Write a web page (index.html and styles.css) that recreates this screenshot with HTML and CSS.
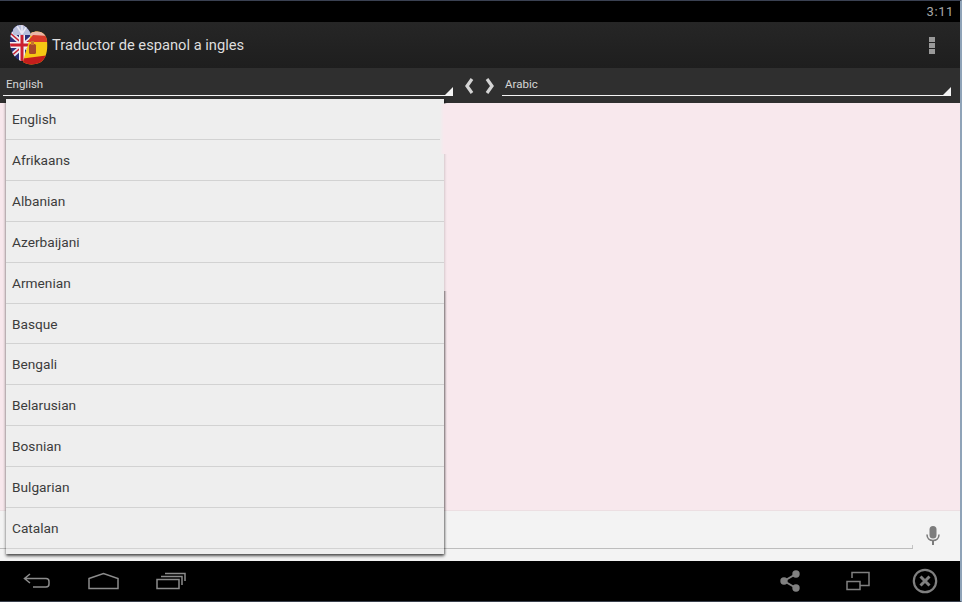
FILE: index.html
```html
<!DOCTYPE html>
<html lang="es">
<head>
    <meta charset="UTF-8">
    <meta name="viewport" content="width=device-width, initial-scale=1.0">
    <title>Traductor de espanol a ingles</title>
    <link rel="stylesheet" href="styles.css">
</head>
<body>
    <div class="screen">
        <div class="status-bar"><span class="clock">3:11</span></div>

        <div class="action-bar">
            <!-- flags logo -->
            <svg class="logo" width="40" height="42" viewBox="0 0 40 42">
                <defs>
                    <clipPath id="ukClip"><ellipse cx="12.500" cy="19" rx="11.500" ry="18" transform="rotate(-6 12.500 19)"/></clipPath>
                    <clipPath id="esClip"><path d="M22 9c6-3 15-2 16 8 1 10-1 19-8 22-5 2-12 2-16-1l2-8 3-9z"/></clipPath>
                </defs>
                <g clip-path="url(#ukClip)">
                    <rect width="30" height="42" fill="#2a2f78"/>
                    <path d="M0 8 30 34M30 8 0 34" stroke="#e6e6f0" stroke-width="5"/>
                    <path d="M0 8 30 34M30 8 0 34" stroke="#c4202e" stroke-width="1.500"/>
                    <path d="M13 0V42M0 21H30" stroke="#f0f0f5" stroke-width="6"/>
                    <path d="M13 0V42M0 21H30" stroke="#cc2030" stroke-width="3"/>
                    <rect x="4" width="18" height="11" fill="#b9bfdc"/>
                    <path d="M8 2l5 8M18 2l-5 8M13 1v9" stroke="#e8e8f4" stroke-width="1.500"/>
                </g>
                <g clip-path="url(#esClip)">
                    <rect x="10" width="30" height="42" fill="#f5c813"/>
                    <rect x="10" width="30" height="12" fill="#eab5a6"/>
                    <path d="M18 18 24 11 40 12V18z" fill="#d83a2a"/>
                    <path d="M10 35 40 31V42H10z" fill="#c41e1c"/>
                    <rect x="20" y="20" width="7" height="10" rx="1.500" fill="#a8482a"/>
                    <rect x="22" y="17" width="3" height="4" fill="#c9752e"/>
                </g>
            </svg>
            <span class="app-title">Traductor de espanol a ingles</span>
            <span class="overflow-menu"><i></i><i></i><i></i></span>
        </div>

        <div class="lang-bar">
            <div class="spinner spinner-from">English</div>
            <div class="arrows">
                <svg width="10" height="16" viewBox="0 0 10 16"><path d="M8 1 3 8l5 7" fill="none" stroke="#d4d4d4" stroke-width="3.200"/></svg>
                <svg width="10" height="16" viewBox="0 0 10 16"><path d="M2 1l5 7-5 7" fill="none" stroke="#d4d4d4" stroke-width="3.200"/></svg>
            </div>
            <div class="spinner spinner-to">Arabic</div>
        </div>

        <div class="result-area"></div>

        <div class="input-row">
            <div class="text-line"></div>
            <svg class="mic" width="14" height="20" viewBox="0 0 14 20">
                <rect x="3.500" y="0" width="7" height="12.500" rx="3.500" fill="#7c7c7c"/>
                <path d="M1 8.500c0 3.500 2.500 6 6 6s6-2.500 6-6" fill="none" stroke="#7c7c7c" stroke-width="1.600"/>
                <rect x="6" y="14" width="2" height="5" fill="#7c7c7c"/>
            </svg>
        </div>

        <div class="nav-bar">
            <div class="nav-group">
                <svg width="28" height="18" viewBox="0 0 28 18"><path d="M7 2 1.500 6.500 7 11M2 6.500H23q3 0 3 3v2.500q0 3-3 3H10" fill="none" stroke="#8c8c8c" stroke-width="1.500"/></svg>
                <svg width="31" height="18" viewBox="0 0 31 18"><path d="M1 6.500 15.500 1.500 30 6.500V16.500H1z" fill="none" stroke="#8c8c8c" stroke-width="1.500"/></svg>
                <svg width="30" height="18" viewBox="0 0 30 18"><path d="M1 7.500H23V16.500H1zM5 4.500H26V13M9 1.500H29V9" fill="none" stroke="#8c8c8c" stroke-width="1.500"/></svg>
            </div>
            <div class="nav-group nav-right">
                <svg class="share-icon" width="22" height="22" viewBox="0 0 22 22"><path d="M17 4 5 11l12 7" fill="none" stroke="#808080" stroke-width="2"/><circle cx="17" cy="4" r="3.700" fill="#808080"/><circle cx="5" cy="11" r="3.700" fill="#808080"/><circle cx="17" cy="18" r="3.700" fill="#808080"/></svg>
                <svg width="24" height="20" viewBox="0 0 24 20"><path d="M1 10.500H14V18.500H1zM6 7V1.500H23V14.500H14" fill="none" stroke="#808080" stroke-width="1.500"/></svg>
                <svg width="26" height="26" viewBox="0 0 26 26"><circle cx="13" cy="13" r="11.200" fill="none" stroke="#808080" stroke-width="2.200"/><path d="M8.500 8.500l9 9M17.500 8.500l-9 9" stroke="#808080" stroke-width="3"/></svg>
            </div>
        </div>

        <!-- open spinner list -->
        <ul class="dropdown">
            <li>English</li>
            <li>Afrikaans</li>
            <li>Albanian</li>
            <li>Azerbaijani</li>
            <li>Armenian</li>
            <li>Basque</li>
            <li>Bengali</li>
            <li>Belarusian</li>
            <li>Bosnian</li>
            <li>Bulgarian</li>
            <li>Catalan</li>
        </ul>
    </div>
</body>
</html>
```

FILE: styles.css
```css
html, body {
    margin: 0;
    padding: 0;
    background: #000;
    overflow: hidden;
}

.screen {
    position: relative;
    display: flex;
    flex-direction: column;
    width: 960px;
    height: 600px;
    border-top: 1px solid #3a4152;
    border-right: 2px solid #8fa3b8;
    border-bottom: 1px solid #39404c;
    font-family: Roboto, "Liberation Sans", sans-serif;
}

.status-bar {
    display: flex;
    justify-content: flex-end;
    align-items: center;
    height: 21px;
    padding-right: 6px;
    background: #000;
}

.clock {
    color: #a8a8a8;
    font-size: 13px;
    letter-spacing: 0.6px;
}

.action-bar {
    display: flex;
    align-items: center;
    height: 46px;
    background: linear-gradient(#262626, #1e1e1e);
}

.logo {
    margin-left: 9px;
    margin-top: -1px;
}

.app-title {
    margin-left: 3px;
    color: #dedede;
    font-size: 14.700px;
}

.overflow-menu {
    display: flex;
    flex-direction: column;
    gap: 1px;
    margin-left: auto;
    margin-right: 25px;
}

.overflow-menu i {
    display: block;
    width: 6px;
    height: 5px;
    background: #999;
}

.lang-bar {
    display: flex;
    height: 35px;
    background: #2f2f2f;
}

.spinner {
    position: relative;
    box-sizing: border-box;
    height: 28px;
    padding: 9px 0 0 3px;
    border-bottom: 1.500px solid #f4f4f4;
    color: #d6d6d6;
    font-size: 11.500px;
}

/* little corner triangle of the spinner */
.spinner::after {
    content: "";
    position: absolute;
    right: 0;
    bottom: 0;
    border-style: solid;
    border-width: 0 0 8px 8px;
    border-color: transparent transparent #f4f4f4 transparent;
}

.spinner-from {
    width: 450px;
    margin-left: 3px;
}

.spinner-to {
    width: 449px;
    padding-left: 3px;
    margin-left: 1px;
    margin-right: 5px;
}

.arrows {
    display: flex;
    align-items: center;
    gap: 11px;
    width: 48px;
    height: 36px;
    padding-left: 11px;
    box-sizing: border-box;
}

.result-area {
    flex: 1;
    background: #f8e8ed;
}

.input-row {
    display: flex;
    align-items: flex-start;
    height: 51px;
    background: #f3f3f3;
    border-top: 1px solid #ecdfe2;
    box-sizing: border-box;
}

.text-line {
    position: relative;
    width: 913px;
    height: 38px;
    border-bottom: 1px solid #bdbdbd;
    box-sizing: border-box;
}

/* small end tick of the text field underline */
.text-line::after {
    content: "";
    position: absolute;
    right: 0;
    bottom: 0;
    width: 1px;
    height: 3px;
    background: #c4c4c4;
}

.mic {
    margin-left: 13px;
    margin-top: 15px;
}

.nav-bar {
    display: flex;
    justify-content: space-between;
    align-items: center;
    height: 40px;
    background: #000;
}

.nav-group {
    display: flex;
    align-items: center;
    gap: 37px;
    margin-left: 23px;
}

.nav-right {
    gap: 42px;
    margin-left: 0;
    margin-right: 22px;
}

.share-icon {
    margin-right: 3px;
}

.dropdown {
    position: absolute;
    top: 98px;
    left: 6px;
    width: 438px;
    height: 455px;
    margin: 0;
    padding: 0;
    list-style: none;
    background: #eeeeee;
    box-shadow: 0 2px 3px rgba(0, 0, 0, 0.6), 1px 1px 2px rgba(0, 0, 0, 0.3);
}

/* right edge of the list fades into the pink near the top */
.dropdown::before {
    content: "";
    position: absolute;
    top: 5px;
    right: -4px;
    width: 8px;
    height: 50px;
    background: linear-gradient(to right, #eeeeee, #f8e8ed 50%);
}

.dropdown::after {
    content: "";
    position: absolute;
    top: 55px;
    right: -4px;
    width: 4px;
    height: 137px;
    background: rgba(248, 232, 237, 0.75);
}

.dropdown li {
    box-sizing: border-box;
    height: 40.920px;
    padding: 12px 0 0 6px;
    border-bottom: 1px solid #d2d2d2;
    color: #3c3c3c;
    font-size: 13.700px;
}
```
